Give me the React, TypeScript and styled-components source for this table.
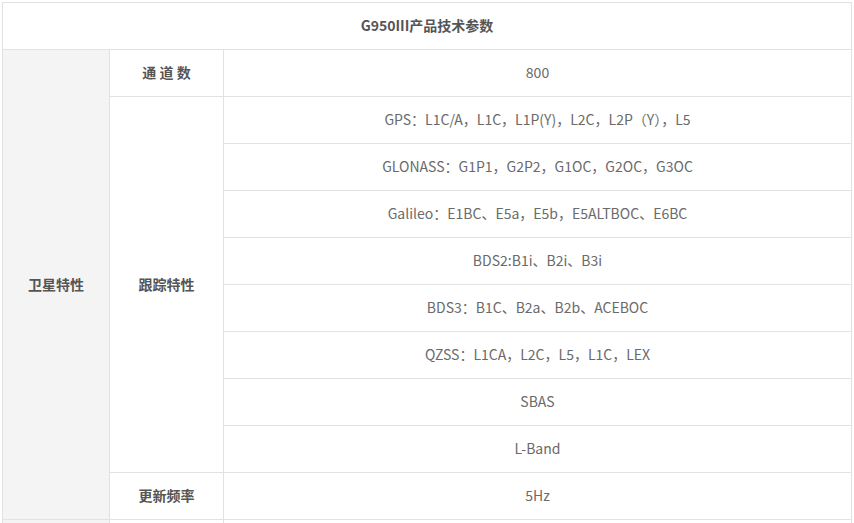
import React from "react";
import styled, { createGlobalStyle } from "styled-components";

const GlobalStyle = createGlobalStyle`
    body {
        margin: 0;
        background: #fff;
        font-family: "Microsoft YaHei", "Noto Sans CJK SC", "Noto Sans", sans-serif;
    }
`;

const Wrapper = styled.div`
    padding: 2px 3px 0 2px;
`;

const SpecTable = styled.table`
    width: 850px;
    border-collapse: collapse;
    table-layout: fixed;
    font-size: 14px;
    color: #6a6a6a;
`;

const Row = styled.tr`
    height: 47px;
`;

const Cell = styled.td`
    border: 1px solid #e2e2e2;
    text-align: center;
    vertical-align: middle;
    padding: 0 8px 2px;
    white-space: nowrap;
`;

const TitleCell = styled(Cell)`
    font-weight: bold;
    color: #555;
`;

const GroupCell = styled(Cell)`
    background: #f4f4f4;
    font-weight: bold;
    color: #555;
`;

const LabelCell = styled(Cell)`
    font-weight: bold;
    color: #555;
`;

const tracking = [
    "GPS：L1C/A，L1C，L1P(Y)，L2C，L2P（Y），L5",
    "GLONASS：G1P1，G2P2，G1OC，G2OC，G3OC",
    "Galileo：E1BC、E5a，E5b，E5ALTBOC、E6BC",
    "BDS2:B1i、B2i、B3i",
    "BDS3：B1C、B2a、B2b、ACEBOC",
    "QZSS：L1CA，L2C，L5，L1C，LEX",
    "SBAS",
    "L-Band",
];

export default function App() {
    return (
        <Wrapper>
            <GlobalStyle />
            <SpecTable>
                <colgroup>
                    <col style={{ width: 107 }} />
                    <col style={{ width: 114 }} />
                    <col />
                </colgroup>
                <tbody>
                    <Row>
                        <TitleCell colSpan={3}>G950III产品技术参数</TitleCell>
                    </Row>
                    <Row>
                        <GroupCell rowSpan={10}>卫星特性</GroupCell>
                        <LabelCell>通 道 数</LabelCell>
                        <Cell>800</Cell>
                    </Row>
                    {tracking.map((t, i) => (
                        <Row key={t}>
                            {i === 0 && <LabelCell rowSpan={tracking.length}>跟踪特性</LabelCell>}
                            <Cell>{t}</Cell>
                        </Row>
                    ))}
                    <Row>
                        <LabelCell>更新频率</LabelCell>
                        <Cell>5Hz</Cell>
                    </Row>
                    <Row>
                        <GroupCell />
                        <LabelCell />
                        <Cell />
                    </Row>
                </tbody>
            </SpecTable>
        </Wrapper>
    );
}
